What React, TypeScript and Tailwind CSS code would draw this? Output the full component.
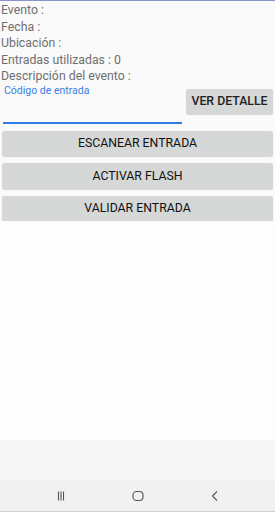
import React from "react";

const App = () => {
  const info = [
    "Evento :",
    "Fecha :",
    "Ubicación :",
    "Entradas utilizadas : 0",
    "Descripción del evento :",
  ];

  const actions = ["ESCANEAR ENTRADA", "ACTIVAR FLASH", "VALIDAR ENTRADA"];

  return (
    <div
      className="w-[275px] h-[512px] flex flex-col bg-[#fafafa] overflow-hidden"
      style={{ fontFamily: "Roboto, 'Noto Sans', sans-serif" }}
    >
      <div className="h-px bg-[#8a93cc]" />

      {/* Info lines */}
      <div className="flex flex-col pl-[1px] pt-[1px]">
        {info.map((line, i) => (
          <div key={i} className="h-[16.5px] text-[12.3px] leading-[16.5px] text-[#6f6f6f]">
            {line}
          </div>
        ))}
      </div>

      {/* Code input + detail */}
      <div className="flex items-start">
        <div className="flex flex-col w-[179px] ml-[3px]">
          <label className="text-[10.5px] leading-[12px] text-[#3b7fe0] pl-[1px]">
            Código de entrada
          </label>
          <div className="h-[25px]" />
          <div className="h-[2px] bg-[#2f7be8]" />
        </div>
        <button className="ml-auto mr-[2px] mt-[4px] w-[87px] h-[25px] bg-[#d6d7d7] text-[12.3px] font-medium text-[#1f1f1f] rounded-[2px] shadow-[0_1px_1px_rgba(0,0,0,0.15)]">
          VER DETALLE
        </button>
      </div>

      {/* Actions */}
      <div className="flex flex-col gap-[7px] px-[2px] mt-[7px]">
        {actions.map((label, i) => (
          <button
            key={i}
            className="h-[25.5px] w-full bg-[#d6d7d7] text-[12.3px] font-normal text-[#111] rounded-[2px] shadow-[0_1px_1px_rgba(0,0,0,0.15)]"
          >
            {label}
          </button>
        ))}
      </div>

      <div className="flex-1 bg-[#fdfdfd]" />
      <div className="h-[40px] bg-[#f7f7f7]" />

      {/* Android nav bar */}
      <div className="h-[32px] bg-[#f1f1f1] border-b border-[#d0d0d0] flex items-center justify-center gap-[65px]">
        <svg width="12" height="12" viewBox="0 0 12 12" className="text-[#555]">
          <path d="M3.5 1.5v9M6 1.5v9M8.5 1.5v9" stroke="currentColor" strokeWidth="1.1" />
        </svg>
        <svg width="12" height="12" viewBox="0 0 12 12" className="text-[#555]">
          <rect x="1" y="1.5" width="10" height="9" rx="3.5" fill="none" stroke="currentColor" strokeWidth="1.1" />
        </svg>
        <svg width="12" height="12" viewBox="0 0 12 12" className="text-[#555]">
          <path d="M8 1.5 3.5 6 8 10.5" fill="none" stroke="currentColor" strokeWidth="1.1" />
        </svg>
      </div>
    </div>
  );
};

export default App;
